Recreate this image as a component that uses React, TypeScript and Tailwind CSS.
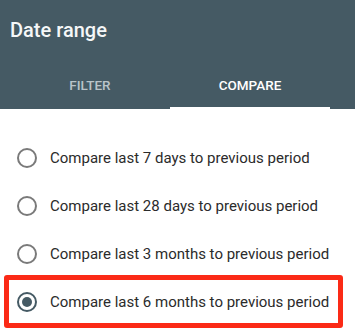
const options = [
  "Compare last 7 days to previous period",
  "Compare last 28 days to previous period",
  "Compare last 3 months to previous period",
  "Compare last 6 months to previous period",
];

function Radio({ checked }: { checked: boolean }) {
  return (
    <span
      className={`flex h-[20px] w-[20px] shrink-0 items-center justify-center rounded-full border-2 ${
        checked ? "border-[#455a64]" : "border-[#7a7a7a]"
      }`}
    >
      {checked && <span className="h-[10px] w-[10px] rounded-full bg-[#455a64]" />}
    </span>
  );
}

export default function App() {
  const selected = 3;
  return (
    <div className="h-[331px] w-[355px] overflow-hidden bg-white font-['Roboto',sans-serif]">
      {/* Header */}
      <div className="h-[109px] bg-[#455a64]">
        <h1 className="pl-[10px] pt-[17px] text-[20px] font-medium leading-[26px] text-[#f5f7f8]">
          Date range
        </h1>
        <div className="mt-[18px] flex pl-[10px]">
          <div className="flex h-[48px] w-[160px] items-center justify-center text-[13.5px] font-medium text-[#b9c4c9]">
            FILTER
          </div>
          <div className="relative flex h-[48px] w-[160px] items-center justify-center text-[13.5px] font-medium text-white">
            COMPARE
            <span className="absolute bottom-0 left-0 right-0 h-[2px] bg-white" />
          </div>
        </div>
      </div>

      {/* Options */}
      <div className="pt-[25px]">
        {options.map((label, i) => (
          <div key={label} className="relative flex h-[48px] items-center">
            <div className="flex w-[50px] justify-center pl-[3px]">
              <Radio checked={i === selected} />
            </div>
            <span className="text-[15px] text-[#2b2b2b]">{label}</span>
            {i === selected && (
              <span className="pointer-events-none absolute -bottom-[2px] left-[4px] right-[12px] -top-[3px] rounded-[3px] border-[5px] border-[#fb2a16]" />
            )}
          </div>
        ))}
      </div>
    </div>
  );
}
